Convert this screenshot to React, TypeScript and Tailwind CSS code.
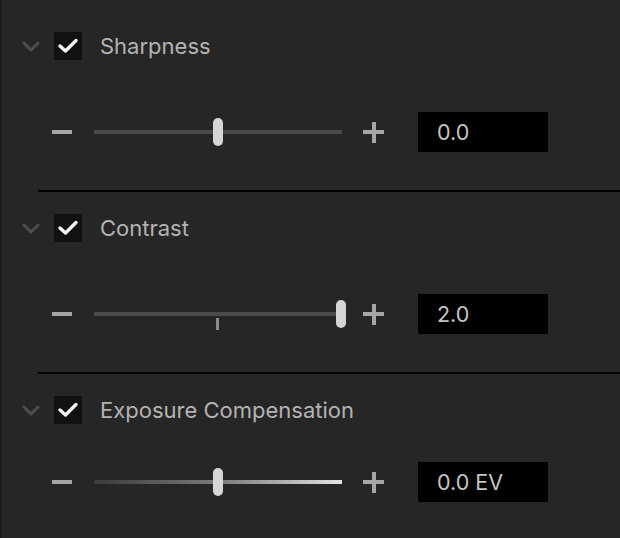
import React from "react";

type Sec = {
  label: string;
  value: string;
  pos: number;
  first?: boolean;
  gradient?: boolean;
  sep?: boolean;
  gap: string;
};

const sections: Sec[] = [
  { label: "Sharpness", value: "0.0", pos: 0.5, first: true, sep: true, gap: "mt-[52px]" },
  { label: "Contrast", value: "2.0", pos: 1, sep: true, gap: "mt-[52px]" },
  { label: "Exposure Compensation", value: "0.0 EV", pos: 0.5, gradient: true, gap: "mt-[38px]" },
];

function Chevron() {
  return (
    <svg width="18" height="11" viewBox="0 0 18 11" className="block">
      <path d="M2 2 L9 9 L16 2" fill="none" stroke="#4e4e4e" strokeWidth="3" strokeLinecap="round" strokeLinejoin="round" />
    </svg>
  );
}

function Check() {
  return (
    <div className="w-[28px] h-[28px] bg-[#111111] flex items-center justify-center">
      <svg width="22" height="16" viewBox="0 0 22 16" className="block">
        <path d="M3 8 L8.5 13 L19 2.5" fill="none" stroke="#f2f2f2" strokeWidth="3.4" strokeLinecap="round" strokeLinejoin="round" />
      </svg>
    </div>
  );
}

function Section({ s }: { s: Sec }) {
  return (
    <div className={s.first ? "pt-[32px]" : "pt-[22px]"}>
      <div className="flex items-center h-[28px]">
        <div className="ml-[20px]">
          <Chevron />
        </div>
        <div className="ml-[14px]">
          <Check />
        </div>
        <span className="ml-[18px] text-[22px] text-[#b3b3b3] leading-none" style={{ fontFamily: "Inter, 'Noto Sans', sans-serif" }}>
          {s.label}
        </span>
      </div>
      <div className={`flex items-center h-[40px] ${s.gap}`}>
        <div className="ml-[50px] w-[20px] h-[4px] bg-[#a6a6a6]" />
        <div className="ml-[22px] relative w-[248px] h-[4px]">
          <div
            className={
              s.gradient
                ? "absolute inset-0 bg-gradient-to-r from-[#3c3c3c] via-[#7a7a7a] to-[#e4e4e4]"
                : "absolute inset-0 bg-[#4b4b4b]"
            }
          />
          {s.pos !== 0.5 ? <div className="absolute left-[122px] top-[6px] w-[3px] h-[12px] bg-[#8a8a8a]" /> : null}
          <div
            className="absolute top-[-12px] w-[10px] h-[28px] rounded-full bg-[#d6d6d6]"
            style={{ left: `${s.pos * 248 - (s.pos === 1 ? 6 : 5)}px` }}
          />
        </div>
        <div className="ml-[21px] relative w-[21px] h-[21px]">
          <div className="absolute left-0 top-[8.5px] w-[21px] h-[4px] bg-[#a6a6a6]" />
          <div className="absolute top-0 left-[8.5px] w-[4px] h-[21px] bg-[#a6a6a6]" />
        </div>
        <div
          className="ml-[34px] w-[130px] h-[40px] bg-black flex items-center pl-[19px] text-[21.5px] text-[#c4c4c4]"
          style={{ fontFamily: "Inter, 'Noto Sans', sans-serif" }}
        >
          {s.value}
        </div>
      </div>
      {s.sep ? <div className="mt-[38px] ml-[36px] h-[2px] bg-black" /> : null}
    </div>
  );
}

export default function App() {
  return (
    <div className="w-[620px] h-[538px] bg-[#262626] flex overflow-hidden">
      <div className="w-[2px] h-full bg-[#1c1c1c]" />
      <div className="flex-1 flex flex-col">
        {sections.map((s) => (
          <Section key={s.label} s={s} />
        ))}
      </div>
    </div>
  );
}
